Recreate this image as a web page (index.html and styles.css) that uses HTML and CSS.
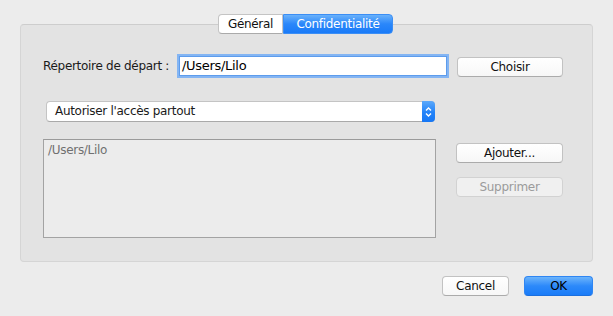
FILE: index.html
```html
<!DOCTYPE html>
<html lang="fr">
<head>
<meta charset="utf-8">
<title>Confidentialité</title>
<link rel="stylesheet" href="styles.css">
</head>
<body>
<div class="window">
  <div class="panel">
    <div class="tabs">
      <div class="tab">Général</div>
      <div class="tab tab-active">Confidentialité</div>
    </div>
    <div class="row row-dir">
      <label class="label">Répertoire de départ :</label>
      <div class="field">/Users/Lilo</div>
      <button class="btn btn-choose">Choisir</button>
    </div>
    <div class="row row-select">
      <div class="select">
        <span class="select-text">Autoriser l'accès partout</span>
        <span class="select-arrows">
          <svg width="13" height="20" viewBox="0 0 13 20">
            <path d="M4 8.5 L6.5 6 L9 8.5" fill="none" stroke="#fff" stroke-width="1.4"/>
            <path d="M4 11.5 L6.5 14 L9 11.5" fill="none" stroke="#fff" stroke-width="1.4"/>
          </svg>
        </span>
      </div>
    </div>
    <div class="row row-list">
      <div class="list">
        <div class="list-item">/Users/Lilo</div>
      </div>
      <div class="list-buttons">
        <button class="btn btn-side">Ajouter...</button>
        <button class="btn btn-side btn-disabled">Supprimer</button>
      </div>
    </div>
  </div>
  <div class="footer">
    <button class="btn btn-cancel">Cancel</button>
    <button class="btn btn-ok">OK</button>
  </div>
</div>
</body>
</html>
```
FILE: styles.css
```css
html, body {
  margin: 0;
  padding: 0;
}
body {
  width: 613px;
  height: 316px;
  background: #ececec;
  font-family: "DejaVu Sans", "Liberation Sans", sans-serif;
  font-size: 12px;
  letter-spacing: -0.3px;
  color: #1a1a1a;
  overflow: hidden;
}
.window {
  padding: 24px 20px 0 20px;
}
.panel {
  height: 238px;
  box-sizing: border-box;
  background: #e3e3e3;
  border: 1px solid #d5d5d5;
  border-top-color: #cdcdcd;
  border-radius: 4px;
  display: flex;
  flex-direction: column;
}
.tabs {
  display: flex;
  justify-content: center;
  margin-top: -11px;
  margin-right: 2px;
}
.tab {
  height: 20px;
  box-sizing: border-box;
  line-height: 18px;
  padding: 0;
  width: 65px;
  text-align: center;
  background: #fff;
  border: 1px solid #c4c4c4;
  border-bottom-color: #aaaaaa;
  border-radius: 4px 0 0 4px;
  color: #111;
}
.tab-active {
  width: 110px;
  border: 1px solid #3b8ef5;
  border-radius: 0 4px 4px 0;
  background: linear-gradient(#69b1fb, #2a87fa 50%, #1a7bf8);
  color: #fff;
}
.row {
  display: flex;
}
.row-dir {
  margin-top: 22px;
  align-items: center;
  height: 20px;
}
.label {
  width: 136px;
  padding-left: 22px;
  box-sizing: content-box;
  white-space: nowrap;
}
.field {
  width: 268px;
  height: 20px;
  box-sizing: border-box;
  background: #fff;
  border: 1px solid #5d9cec;
  box-shadow: 0 0 0 2px #84b5f3;
  line-height: 18px;
  padding-left: 2px;
  font-size: 13px;
  color: #000;
}
.btn {
  font-family: inherit;
  font-size: 12px;
  letter-spacing: -0.3px;
  color: #111;
  height: 20px;
  box-sizing: border-box;
  padding: 0;
  background: linear-gradient(#ffffff, #f7f7f7);
  border: 1px solid #c2c2c2;
  border-bottom-color: #ababab;
  border-radius: 4px;
  line-height: 18px;
}
.btn-choose {
  width: 106px;
  margin-left: 10px;
  margin-top: 2px;
}
.row-select {
  margin-top: 25px;
  padding-left: 25px;
}
.select {
  width: 389px;
  height: 21px;
  box-sizing: border-box;
  display: flex;
  align-items: stretch;
  background: #fff;
  border: 1px solid #c4c4c4;
  border-bottom-color: #a9a9a9;
  border-radius: 4px;
}
.select-text {
  flex: 1;
  padding-left: 8px;
  line-height: 19px;
}
.select-arrows {
  width: 13px;
  display: flex;
  align-items: center;
  justify-content: center;
  margin: -1px -1px -1px 0;
  background: linear-gradient(#5ca9fb, #2383f9 55%, #1677f5);
  border-radius: 0 4px 4px 0;
}
.row-list {
  margin-top: 17px;
  padding-left: 22px;
}
.list {
  width: 393px;
  height: 99px;
  box-sizing: border-box;
  background: #ececec;
  border: 1px solid #a3a3a3;
  border-top-color: #9a9a9a;
}
.list-item {
  padding: 2px 0 0 4px;
  color: #707070;
  font-size: 12px;
  line-height: 16px;
}
.list-buttons {
  display: flex;
  flex-direction: column;
  gap: 14px;
  margin-left: 20px;
  margin-top: 4px;
}
.btn-side {
  width: 107px;
}
.btn-disabled {
  background: #f0f0f0;
  border-color: #d2d2d2;
  color: #9b9b9b;
}
.footer {
  display: flex;
  justify-content: flex-end;
  gap: 15px;
  margin-top: 14px;
}
.btn-cancel {
  width: 67px;
}
.btn-ok {
  width: 69px;
  background: linear-gradient(#6cb4fb, #2c89fa 50%, #1a7cf8);
  border: 1px solid #2f86f3;
  border-bottom-color: #1b6fde;
  color: #000;
}
```
